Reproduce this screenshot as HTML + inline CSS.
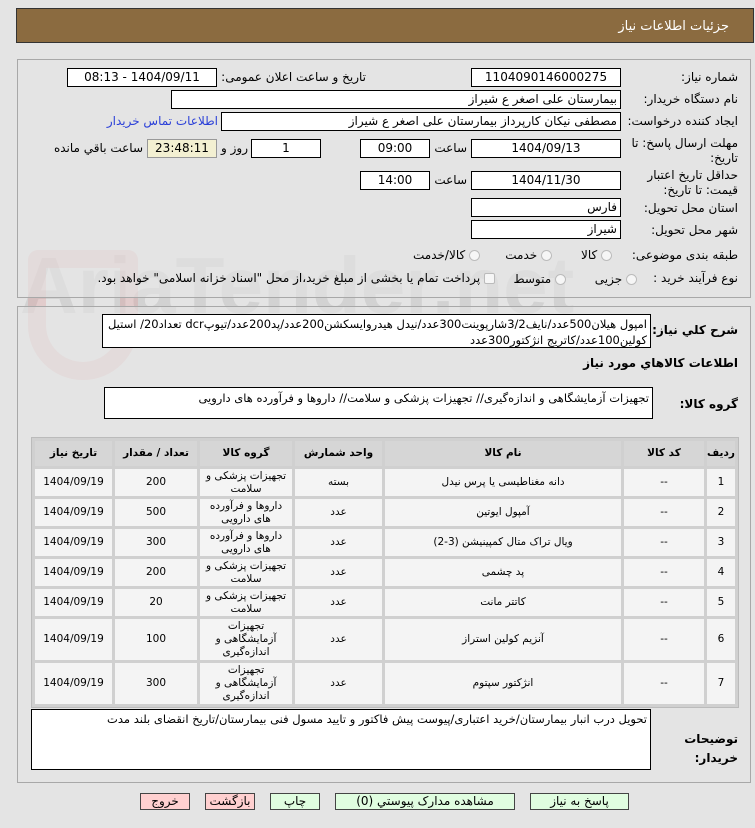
<!DOCTYPE html>
<html><head><meta charset="utf-8"><style>
*{margin:0;padding:0;box-sizing:border-box}
body{width:755px;height:828px;background:#e4e4e4;font-family:"DejaVu Sans","Noto Sans CJK SC",sans-serif;font-size:11px;color:#000;position:relative;overflow:hidden;direction:rtl}
.a{position:absolute}
.hdr{left:16px;top:8px;width:738px;height:35px;background:#8b6b40;border:1px solid #333;color:#fff;font-size:13px;padding-right:24px;line-height:35px}
.pn{border:1px solid #a8a8a8;background:#e4e4e4}
.b{position:absolute;background:#fff;border:1px solid #000;height:19px;line-height:17px;text-align:center;white-space:nowrap;overflow:hidden}
.l{position:absolute;white-space:nowrap;text-align:right}
.ta{position:absolute;background:#fff;border:1px solid #000;padding:3px 4px;line-height:17px;text-align:right}
table{position:absolute;left:31px;top:437px;width:708px;border-collapse:separate;border-spacing:3px;background:#d0d0d0;border:1px solid #bbb;direction:rtl;table-layout:fixed}
td,th{text-align:center;font-size:10.5px;line-height:13px;padding:0;overflow:hidden}
th{background:#d6d6d6;height:25px}
td{background:#f4f4f4}
tr.r td{height:27px}
tr.t td{height:41px}
.btn{position:absolute;top:793px;height:17px;border:1px solid #444;text-align:center;line-height:15px;font-size:12px}
.rad{display:inline-block;width:11px;height:11px;border:1px solid #bbb;border-radius:50%;background:#f6f6f6;vertical-align:middle}
</style></head><body>
<div class="a hdr">جزئیات اطلاعات نیاز</div>
<div class="a" style="left:20px;top:240px;font-size:80px;font-weight:bold;color:rgba(170,170,170,.3);direction:ltr;font-family:'Liberation Sans',sans-serif">AriaTender.net</div>
<div class="a" style="left:28px;top:250px;width:110px;height:130px;border:18px solid rgba(220,130,130,.25);border-radius:10px 10px 55px 55px"></div>
<div class="a pn" style="left:17px;top:59px;width:734px;height:239px;background:rgba(228,228,228,.6)"></div>
<div class="a pn" style="left:17px;top:306px;width:734px;height:477px;background:rgba(228,228,228,.6)"></div>

<div class="l" style="right:17px;top:70px;font-size:12px">شماره نیاز:</div>
<div class="b" style="left:471px;top:68px;width:150px;font-size:12px">1104090146000275</div>
<div class="l" style="right:389px;top:70px;font-size:12px">تاریخ و ساعت اعلان عمومی:</div>
<div class="b" style="left:67px;top:68px;width:150px;font-size:12px">1404/09/11 - 08:13</div>

<div class="l" style="right:17px;top:92px;font-size:12px">نام دستگاه خریدار:</div>
<div class="b" style="left:171px;top:90px;width:450px;text-align:right;padding-right:3px;font-size:12px">بیمارستان علی اصغر  ع  شیراز</div>

<div class="l" style="right:17px;top:114px;font-size:12px">ایجاد کننده درخواست:</div>
<div class="b" style="left:221px;top:112px;width:400px;text-align:right;padding-right:3px;font-size:12px">مصطفی نیکان کارپرداز بیمارستان علی اصغر  ع  شیراز</div>
<div class="l" style="right:537px;top:114px;color:#2a3fd8;font-size:12px">اطلاعات تماس خریدار</div>

<div class="l" style="right:17px;top:136px;font-size:12px;line-height:15px;text-align:right">مهلت ارسال پاسخ: تا<br>تاریخ:</div>
<div class="b" style="left:471px;top:139px;width:150px;font-size:12px">1404/09/13</div>
<div class="l" style="right:288px;top:141px;font-size:12px">ساعت</div>
<div class="b" style="left:360px;top:139px;width:70px;font-size:12px">09:00</div>
<div class="b" style="left:251px;top:139px;width:70px;font-size:12px">1</div>
<div class="l" style="right:507px;top:141px;font-size:12px">روز و</div>
<div class="b" style="left:147px;top:139px;width:70px;background:#f3f0d2;border-color:#999;font-size:12px">23:48:11</div>
<div class="l" style="right:612px;top:141px;font-size:12px">ساعت باقي مانده</div>

<div class="l" style="right:17px;top:168px;font-size:12px;line-height:15px">حداقل تاریخ اعتبار<br>قیمت: تا تاریخ:</div>
<div class="b" style="left:471px;top:171px;width:150px;font-size:12px">1404/11/30</div>
<div class="l" style="right:288px;top:173px;font-size:12px">ساعت</div>
<div class="b" style="left:360px;top:171px;width:70px;font-size:12px">14:00</div>

<div class="l" style="right:17px;top:201px;font-size:12px">استان محل تحویل:</div>
<div class="b" style="left:471px;top:198px;width:150px;text-align:right;padding-right:3px;font-size:12px">فارس</div>
<div class="l" style="right:17px;top:223px;font-size:12px">شهر محل تحویل:</div>
<div class="b" style="left:471px;top:220px;width:150px;text-align:right;padding-right:3px;font-size:12px">شیراز</div>

<div class="l" style="right:17px;top:248px;font-size:12px">طبقه بندی موضوعی:</div>
<div class="l" style="right:143px;top:248px;font-size:12px"><span class="rad"></span> کالا</div>
<div class="l" style="right:203px;top:248px;font-size:12px"><span class="rad"></span> خدمت</div>
<div class="l" style="right:275px;top:248px;font-size:12px"><span class="rad"></span> کالا/خدمت</div>

<div class="l" style="right:17px;top:271px;font-size:12px">نوع فرآیند خرید :</div>
<div class="l" style="right:118px;top:272px;font-size:12px"><span class="rad"></span> جزیی</div>
<div class="l" style="right:189px;top:272px;font-size:12px"><span class="rad"></span> متوسط</div>
<div class="l" style="right:260px;top:271px;font-size:12px"><span class="rad" style="border-radius:2px"></span> پرداخت تمام یا بخشی از مبلغ خرید،از محل "اسناد خزانه اسلامی" خواهد بود.</div>

<div class="l" style="right:17px;top:323px;font-size:12px;font-weight:bold">شرح کلي نياز:</div>
<div class="ta" style="left:102px;top:314px;width:549px;height:34px;padding:1px 3px;line-height:16px;font-size:11.5px">امپول هیلان500عدد/نایف3/2شارپوینت300عدد/نیدل هیدروایسکشن200عدد/پد200عدد/تیوپdcr تعداد20/ استیل کولین100عدد/کاتریج انژکتور300عدد</div>
<div class="l" style="right:17px;top:356px;font-size:12px;font-weight:bold">اطلاعات کالاهاي مورد نياز</div>
<div class="l" style="right:17px;top:397px;font-size:12px;font-weight:bold">گروه کالا:</div>
<div class="ta" style="left:104px;top:387px;width:549px;height:32px;padding:2px 3px;font-size:11.5px">تجهیزات آزمایشگاهی و اندازه‌گیری// تجهیزات پزشکی و سلامت// داروها و فرآورده های دارویی</div>

<table>
<colgroup><col style="width:28px"><col style="width:80px"><col style="width:236px"><col style="width:87px"><col style="width:92px"><col style="width:82px"><col></colgroup>
<tr><th>ردیف</th><th>کد کالا</th><th>نام کالا</th><th>واحد شمارش</th><th>گروه کالا</th><th>تعداد / مقدار</th><th>تاریخ نیاز</th></tr>
<tr class="r"><td>1</td><td>--</td><td>دانه مغناطیسی یا پرس نیدل</td><td>بسته</td><td>تجهیزات پزشکی و سلامت</td><td>200</td><td>1404/09/19</td></tr>
<tr class="r"><td>2</td><td>--</td><td>آمپول ایوتین</td><td>عدد</td><td>داروها و فرآورده های دارویی</td><td>500</td><td>1404/09/19</td></tr>
<tr class="r"><td>3</td><td>--</td><td>ویال تراک متال کمپینیشن (3-2)</td><td>عدد</td><td>داروها و فرآورده های دارویی</td><td>300</td><td>1404/09/19</td></tr>
<tr class="r"><td>4</td><td>--</td><td>پد چشمی</td><td>عدد</td><td>تجهیزات پزشکی و سلامت</td><td>200</td><td>1404/09/19</td></tr>
<tr class="r"><td>5</td><td>--</td><td>کاتتر مانت</td><td>عدد</td><td>تجهیزات پزشکی و سلامت</td><td>20</td><td>1404/09/19</td></tr>
<tr class="t"><td>6</td><td>--</td><td>آنزیم کولین استراز</td><td>عدد</td><td>تجهیزات<br>آزمایشگاهی و<br>اندازه‌گیری</td><td>100</td><td>1404/09/19</td></tr>
<tr class="t"><td>7</td><td>--</td><td>انژکتور سپتوم</td><td>عدد</td><td>تجهیزات<br>آزمایشگاهی و<br>اندازه‌گیری</td><td>300</td><td>1404/09/19</td></tr>
</table>

<div class="ta" style="left:31px;top:709px;width:620px;height:61px;padding:1px 3px;font-size:11.5px">تحویل درب انبار بیمارستان/خرید اعتباری/پیوست پیش فاکتور و تایید مسول فنی بیمارستان/تاریخ انقضای بلند مدت</div>
<div class="l" style="right:17px;top:730px;font-size:12px;font-weight:bold;line-height:19px">توضیحات<br>خریدار:</div>

<div class="btn" style="left:140px;width:50px;background:#ffd0d0">خروج</div>
<div class="btn" style="left:205px;width:50px;background:#ffd0d0">بازگشت</div>
<div class="btn" style="left:270px;width:50px;background:#e0fde0">چاپ</div>
<div class="btn" style="left:335px;width:180px;background:#e0fde0">مشاهده مدارک پیوستي (0)</div>
<div class="btn" style="left:530px;width:99px;background:#e0fde0">پاسخ به نیاز</div>
</body></html>
